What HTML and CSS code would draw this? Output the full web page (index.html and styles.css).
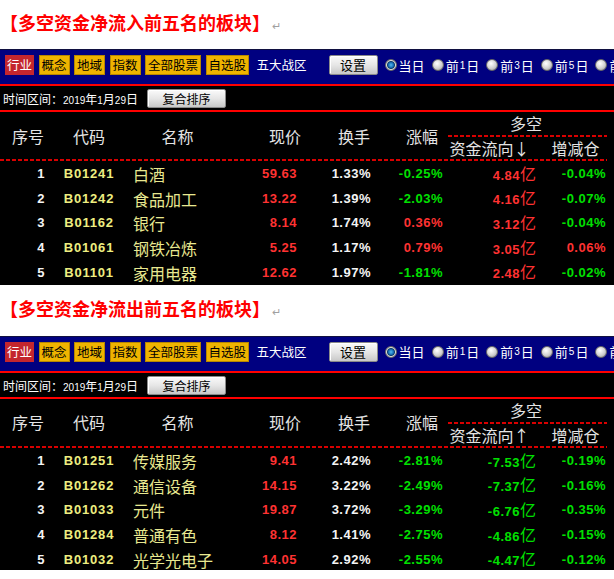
FILE: index.html
```html
<!DOCTYPE html>
<html lang="zh">
<head>
<meta charset="utf-8">
<title>多空资金</title>
<link rel="stylesheet" href="styles.css">
</head>
<body>
<p class="title">【多空资金净流入前五名的板块】<span class="mark">↵</span></p>
<div class="panel">
  <div class="toolbar">
    <span class="tab tab--on">行业</span>
    <span class="tab">概念</span>
    <span class="tab">地域</span>
    <span class="tab">指数</span>
    <span class="tab">全部股票</span>
    <span class="tab">自选股</span>
    <span class="zone">五大战区</span>
    <span class="btn btn--set">设置</span>
    <span class="opt"><span class="radio radio--on"></span>当日</span>
    <span class="opt"><span class="radio"></span>前<small>1</small>日</span>
    <span class="opt"><span class="radio"></span>前<small>3</small>日</span>
    <span class="opt"><span class="radio"></span>前<small>5</small>日</span>
    <span class="opt"><span class="radio"></span>前<small>10</small>日</span>
  </div>
  <div class="timebar">
    <span class="period">时间区间：<small>2019</small>年<small>1</small>月<small>29</small>日</span>
    <span class="btn btn--sort">复合排序</span>
  </div>
  <div class="grid">
    <div class="h h--r c1">序号</div>
    <div class="h c2">代码</div>
    <div class="h c3">名称</div>
    <div class="h h--r c4">现价</div>
    <div class="h h--r c5">换手</div>
    <div class="h h--r c6">涨幅</div>
    <div class="h h--top">多空</div>
    <div class="h h--sub c7">资金流向↓</div>
    <div class="h h--sub c8">增减仓</div>
    <div class="rule"></div>

    <div class="d n">1</div><div class="d code">B01241</div><div class="d name">白酒</div><div class="d num up">59.63</div><div class="d num w">1.33%</div><div class="d num dn">-0.25%</div><div class="d num up">4.84<span class="yi">亿</span></div><div class="d num dn">-0.04%</div>
    <div class="d n">2</div><div class="d code">B01242</div><div class="d name">食品加工</div><div class="d num up">13.22</div><div class="d num w">1.39%</div><div class="d num dn">-2.03%</div><div class="d num up">4.16<span class="yi">亿</span></div><div class="d num dn">-0.07%</div>
    <div class="d n">3</div><div class="d code">B01162</div><div class="d name">银行</div><div class="d num up">8.14</div><div class="d num w">1.74%</div><div class="d num up">0.36%</div><div class="d num up">3.12<span class="yi">亿</span></div><div class="d num dn">-0.04%</div>
    <div class="d n">4</div><div class="d code">B01061</div><div class="d name">钢铁冶炼</div><div class="d num up">5.25</div><div class="d num w">1.17%</div><div class="d num up">0.79%</div><div class="d num up">3.05<span class="yi">亿</span></div><div class="d num up">0.06%</div>
    <div class="d n">5</div><div class="d code">B01101</div><div class="d name">家用电器</div><div class="d num up">12.62</div><div class="d num w">1.97%</div><div class="d num dn">-1.81%</div><div class="d num up">2.48<span class="yi">亿</span></div><div class="d num dn">-0.02%</div>
  </div>
</div>

<p class="title title--second">【多空资金净流出前五名的板块】<span class="mark">↵</span></p>
<div class="panel panel--second">
  <div class="toolbar">
    <span class="tab tab--on">行业</span>
    <span class="tab">概念</span>
    <span class="tab">地域</span>
    <span class="tab">指数</span>
    <span class="tab">全部股票</span>
    <span class="tab">自选股</span>
    <span class="zone">五大战区</span>
    <span class="btn btn--set">设置</span>
    <span class="opt"><span class="radio radio--on"></span>当日</span>
    <span class="opt"><span class="radio"></span>前<small>1</small>日</span>
    <span class="opt"><span class="radio"></span>前<small>3</small>日</span>
    <span class="opt"><span class="radio"></span>前<small>5</small>日</span>
    <span class="opt"><span class="radio"></span>前<small>10</small>日</span>
  </div>
  <div class="timebar">
    <span class="period">时间区间：<small>2019</small>年<small>1</small>月<small>29</small>日</span>
    <span class="btn btn--sort">复合排序</span>
  </div>
  <div class="grid">
    <div class="h h--r c1">序号</div>
    <div class="h c2">代码</div>
    <div class="h c3">名称</div>
    <div class="h h--r c4">现价</div>
    <div class="h h--r c5">换手</div>
    <div class="h h--r c6">涨幅</div>
    <div class="h h--top">多空</div>
    <div class="h h--sub c7">资金流向↑</div>
    <div class="h h--sub c8">增减仓</div>
    <div class="rule"></div>

    <div class="d n">1</div><div class="d code">B01251</div><div class="d name">传媒服务</div><div class="d num up">9.41</div><div class="d num w">2.42%</div><div class="d num dn">-2.81%</div><div class="d num dn">-7.53<span class="yi">亿</span></div><div class="d num dn">-0.19%</div>
    <div class="d n">2</div><div class="d code">B01262</div><div class="d name">通信设备</div><div class="d num up">14.15</div><div class="d num w">3.22%</div><div class="d num dn">-2.49%</div><div class="d num dn">-7.37<span class="yi">亿</span></div><div class="d num dn">-0.16%</div>
    <div class="d n">3</div><div class="d code">B01033</div><div class="d name">元件</div><div class="d num up">19.87</div><div class="d num w">3.72%</div><div class="d num dn">-3.29%</div><div class="d num dn">-6.76<span class="yi">亿</span></div><div class="d num dn">-0.35%</div>
    <div class="d n">4</div><div class="d code">B01284</div><div class="d name">普通有色</div><div class="d num up">8.12</div><div class="d num w">1.41%</div><div class="d num dn">-2.75%</div><div class="d num dn">-4.86<span class="yi">亿</span></div><div class="d num dn">-0.15%</div>
    <div class="d n">5</div><div class="d code">B01032</div><div class="d name">光学光电子</div><div class="d num up">14.05</div><div class="d num w">2.92%</div><div class="d num dn">-2.55%</div><div class="d num dn">-4.47<span class="yi">亿</span></div><div class="d num dn">-0.12%</div>
  </div>
</div>
</body>
</html>
```

FILE: styles.css
```css
* { box-sizing: border-box; }
html, body { margin: 0; padding: 0; background: #fff; }
body {
  width: 614px;
  height: 579px;
  overflow: hidden;
  font-family: "Noto Sans CJK SC", "Noto Sans", sans-serif;
}

.title {
  margin: 0;
  height: 49px;
  padding: 10px 0 0 0;
  font-size: 18px;
  line-height: 24px;
  font-weight: 700;
  color: #ff0000;
  white-space: nowrap;
}
.title--second { height: 51px; padding-top: 11px; }
.mark {
  font-weight: 400;
  font-size: 11px;
  color: #a0a0a0;
  margin-left: 2px;
}

.panel {
  width: 614px;
  background: #000;
  overflow: hidden;
}
.panel--second { height: 234px; }

/* toolbar */
.toolbar {
  height: 37px;
  background: #000080;
  border-top: 1px solid #101040;
  border-bottom: 2px solid #ff0000;
  display: flex;
  align-items: flex-start;
  padding: 5px 0 0 5px;
  white-space: nowrap;
  font-size: 12.5px;
}
.tab {
  height: 20px;
  line-height: 18px;
  padding: 0 2px;
  margin-right: 4.5px;
  background: #efb400;
  border: 1px solid #b78700;
  color: #000;
  flex: none;
}
.tab--on {
  background: #c4262e;
  border-color: #c4262e;
  color: #fff;
  padding: 0 1px;
}
.zone {
  color: #fff;
  line-height: 20px;
  margin-left: 3px;
  font-size: 12.5px;
  flex: none;
}
.btn {
  flex: none;
  text-align: center;
  color: #000;
  background: linear-gradient(#fafafa, #e6e6e6 50%, #c8c8c8);
  border: 1px solid #8a8a8a;
  border-radius: 2px;
  box-shadow: inset 1px 1px 0 #fff;
}
.btn--set {
  width: 49px;
  height: 20px;
  line-height: 18px;
  margin-left: 22px;
  font-size: 13px;
}
.opt {
  flex: none;
  display: flex;
  align-items: center;
  height: 20px;
  color: #fff;
  font-size: 13px;
  margin-left: 7px;
}
.opt small {
  font-family: "Liberation Sans", sans-serif;
  font-size: 10px;
  padding: 0 1px;
}
.radio {
  width: 12px;
  height: 12px;
  margin-right: 2px;
  border-radius: 50%;
  border: 1px solid #6a6a6a;
  background: radial-gradient(circle at 40% 35%, #ffffff, #d0d0d0 55%, #8c8c8c);
}
.radio--on {
  background: radial-gradient(circle at 50% 50%, #56b8f0 0, #1670b8 2.5px, #0a3d70 3.5px, #e0e0e0 4.5px, #9a9a9a 6px);
}

/* time row */
.timebar {
  height: 26px;
  border-bottom: 2px solid #ff0000;
  display: flex;
  align-items: flex-start;
  padding: 3px 0 0 3px;
}
.period {
  color: #fff;
  font-size: 12px;
  line-height: 19px;
  white-space: nowrap;
}
.period small {
  font-family: "Liberation Sans", sans-serif;
  font-size: 10px;
}
.btn--sort {
  width: 79px;
  height: 19px;
  line-height: 17px;
  margin-left: 9px;
  font-size: 12px;
}

/* table */
.grid {
  width: 610px;
  display: grid;
  grid-template-columns: 50px 78px 99px 78px 70px 72px 93px 70px;
  grid-template-rows: 25px 22px 3px repeat(5, 24.6px);
  background: #000;
}
.h {
  color: #e4e4e4;
  font-size: 16px;
  line-height: 20px;
  grid-row: 1 / span 2;
  align-self: center;
  text-align: center;
  white-space: nowrap;
}
.h--r { text-align: right; }
.c1 { grid-column: 1; padding-right: 6px; }
.c2 { grid-column: 2; }
.c3 { grid-column: 3; }
.c4 { grid-column: 4; padding-right: 4px; }
.c5 { grid-column: 5; padding-right: 5px; }
.c6 { grid-column: 6; padding-right: 9px; }
.h--top {
  grid-column: 7 / span 2;
  grid-row: 1;
  align-self: stretch;
  padding-top: 1px;
  padding-right: 3px;
  margin-left: 1px;
  margin-right: 3px;
  background: repeating-linear-gradient(90deg, #d80000 0 4px, transparent 4px 6px) left bottom / 100% 2px no-repeat;
}
.h--sub { grid-row: 2; align-self: center; }
.c7 { padding-right: 8px; }
.c8 { padding-left: 1px; }
.rule {
  grid-column: 1 / -1;
  grid-row: 3;
  height: 2px;
  margin-right: 3px;
  background: repeating-linear-gradient(90deg, #d80000 0 4px, transparent 4px 6px);
}

.d {
  align-self: center;
  white-space: nowrap;
  font-family: "Liberation Sans", sans-serif;
  font-weight: 700;
  font-size: 13px;
  letter-spacing: 0.5px;
  line-height: 20px;
}
.n { color: #f4f4f4; text-align: right; padding-right: 5px; }
.code { color: #eeee80; text-align: center; letter-spacing: 0.8px; }
.name {
  font-family: "Noto Sans CJK SC", sans-serif;
  font-weight: 400;
  font-size: 16px;
  letter-spacing: 0;
  color: #e8e890;
  padding-left: 5px;
}
.num { text-align: right; padding-right: 4px; }
.num:nth-child(8n+6) { padding-right: 8px; }
.w { color: #f4f4f4; }
.up { color: #ff3232; }
.dn { color: #00e000; }
.yi {
  font-family: "Noto Sans CJK SC", sans-serif;
  font-weight: 400;
  font-size: 16px;
  letter-spacing: 0;
}
```
